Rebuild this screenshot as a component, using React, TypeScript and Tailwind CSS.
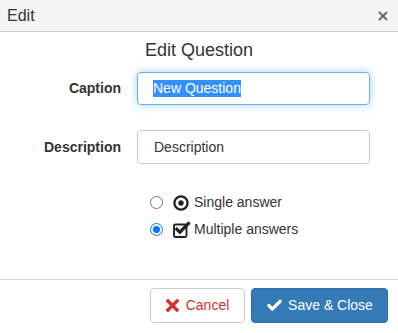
import { X, Check } from "lucide-react";

const font = { fontFamily: '"Liberation Sans", Arial, sans-serif' };

function DotCircle() {
  return (
    <svg width="16" height="16" viewBox="0 0 16 16" className="shrink-0">
      <circle cx="8" cy="8" r="6.6" fill="none" stroke="#222" strokeWidth="2.3" />
      <circle cx="8" cy="8" r="2.7" fill="#222" />
    </svg>
  );
}

function CheckSquare() {
  return (
    <svg width="18" height="17" viewBox="0 0 18 17" className="shrink-0">
      <rect x="1" y="3.5" width="12.5" height="12.5" rx="1.5" fill="none" stroke="#222" strokeWidth="1.9" />
      <path d="M3.8 8.2 L6.9 11.2 L15.4 2.6" fill="none" stroke="#222" strokeWidth="3.2" strokeLinecap="square" />
    </svg>
  );
}

export default function App() {
  return (
    <div className="w-[398px] h-[333px] bg-white text-[#333] text-[14px] flex flex-col" style={font}>
      {/* Titlebar */}
      <div className="h-[32px] bg-[#f4f4f4] border-b border-[#cfcfcf] flex items-center justify-between pl-[7px] pr-[8px] shrink-0">
        <span className="text-[16px] text-[#333]">Edit</span>
        <X size={14} strokeWidth={3.4} className="text-[#6a6a6a]" />
      </div>

      {/* Body */}
      <div className="flex-1 flex flex-col">
        <div className="text-center text-[18px] leading-[20px] mt-[8px] text-[#333]">Edit Question</div>

        <div className="flex items-center mt-[12px]">
          <label className="w-[121px] text-right font-bold">Caption</label>
          <div className="ml-[16px] w-[233px] h-[33px] border border-[#66afe9] rounded-[4px] shadow-[0_0_8px_rgba(102,175,233,0.6)] flex items-center pl-[15px]">
            <span className="bg-[#3390ff] text-white leading-[17px]">New Question</span>
          </div>
        </div>

        <div className="flex items-center mt-[25px]">
          <label className="w-[121px] text-right font-bold">Description</label>
          <div className="ml-[16px] w-[233px] h-[34px] border border-[#ccc] rounded-[4px] flex items-center pl-[16px]">
            <span>Description</span>
          </div>
        </div>

        <div className="ml-[150px] mt-[30px] flex flex-col gap-[10px]">
          <div className="flex items-center h-[17px]">
            <span className="w-[13px] h-[13px] rounded-full border border-[#767676] bg-white" />
            <span className="ml-[10px]"><DotCircle /></span>
            <span className="ml-[5px]">Single answer</span>
          </div>
          <div className="flex items-center h-[17px]">
            <span className="w-[13px] h-[13px] rounded-full border-[1.5px] border-[#0075ff] bg-white flex items-center justify-center">
              <span className="w-[7px] h-[7px] rounded-full bg-[#0075ff]" />
            </span>
            <span className="ml-[10px]"><CheckSquare /></span>
            <span className="ml-[3px]">Multiple answers</span>
          </div>
        </div>
      </div>

      {/* Footer */}
      <div className="h-[54px] border-t border-[#d0d0d0] flex items-start justify-end gap-[6px] pr-[10px] pt-[8px] shrink-0">
        <button className="w-[95px] h-[35px] border border-[#ccc] rounded-[4px] bg-white flex items-center justify-center gap-[7px]">
          <svg width="13" height="13" viewBox="0 0 13 13">
            <path d="M2 2 L11 11 M11 2 L2 11" stroke="#d9302c" strokeWidth="3.4" strokeLinecap="square" />
          </svg>
          <span className="text-[#d9302c]">Cancel</span>
        </button>
        <button className="w-[137px] h-[35px] border border-[#2e6da4] rounded-[4px] bg-[#337ab7] text-white flex items-center justify-center gap-[5px]">
          <Check size={17} strokeWidth={4.5} />
          <span>Save &amp; Close</span>
        </button>
      </div>
    </div>
  );
}
